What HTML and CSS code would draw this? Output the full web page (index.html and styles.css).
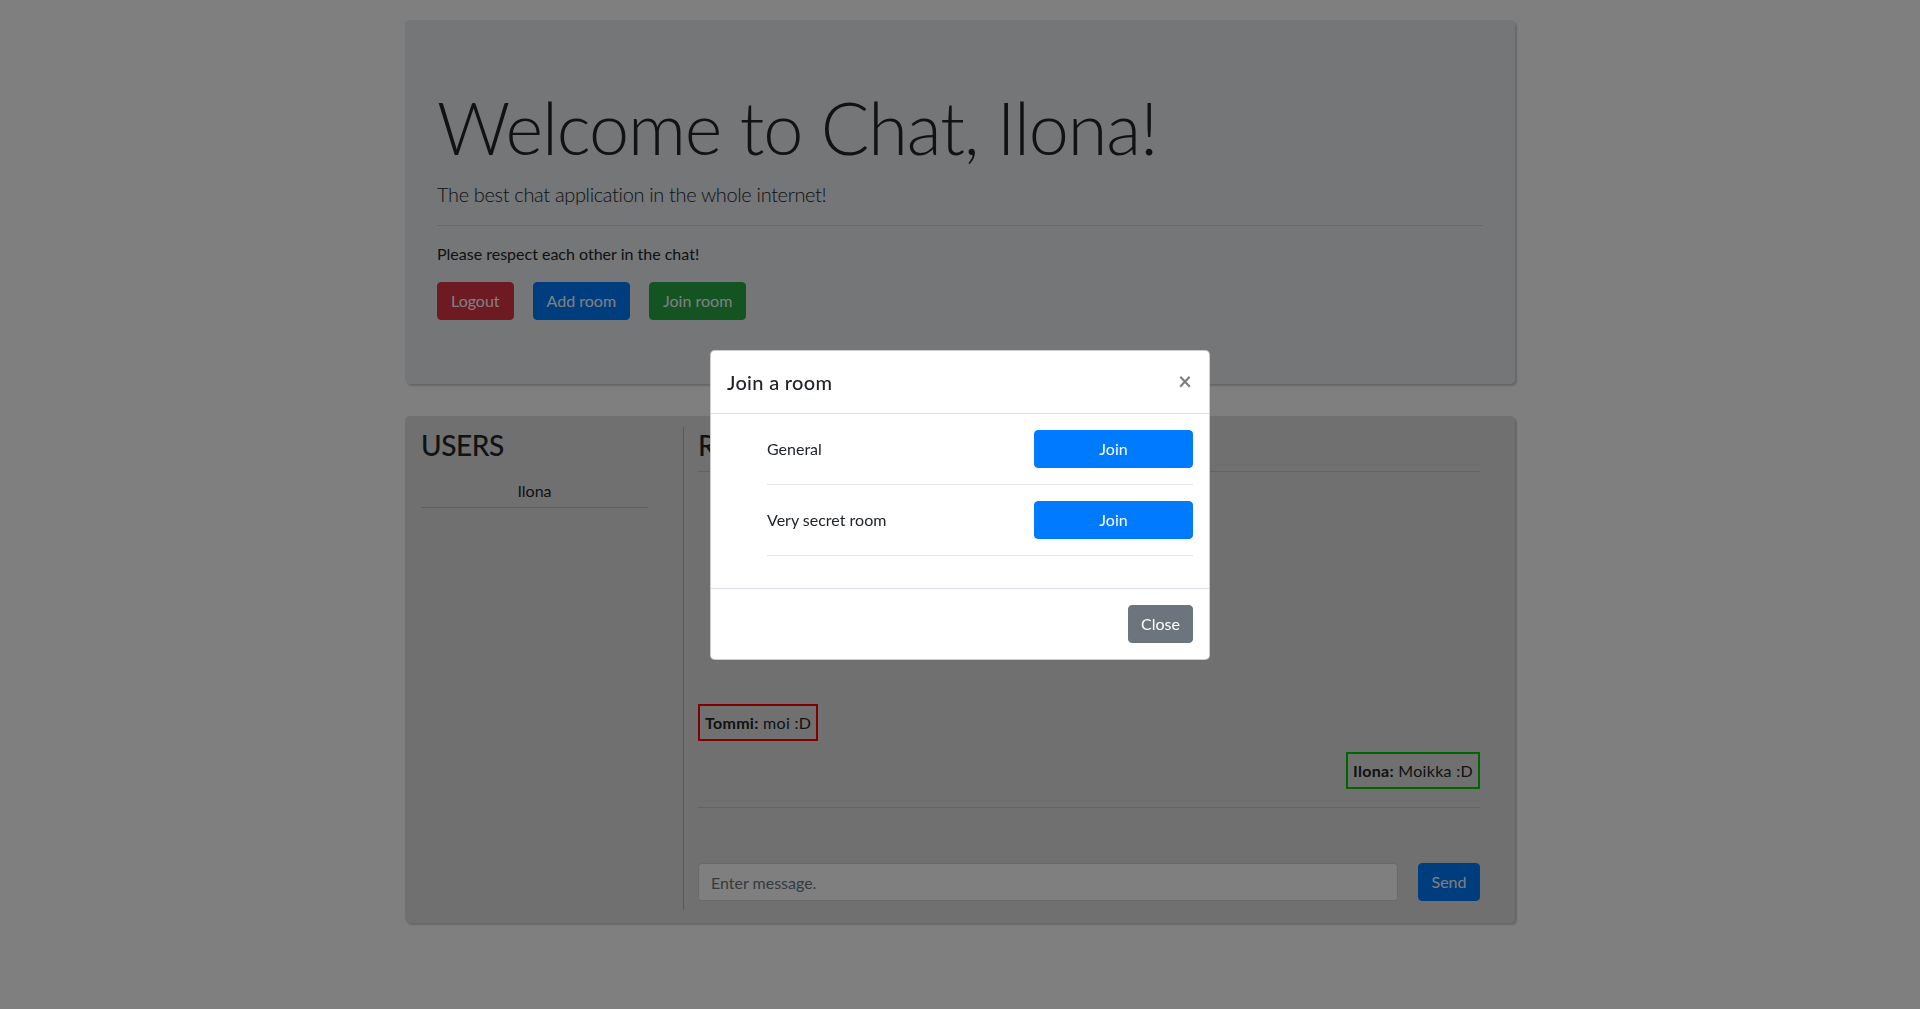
FILE: index.html
```html
<!DOCTYPE html>
<html lang="en">
<head>
<meta charset="utf-8">
<title>Chat</title>
<link rel="stylesheet" href="styles.css">
</head>
<body>
<div class="container">
  <div class="jumbotron">
    <h1 class="display">Welcome to Chat, Ilona!</h1>
    <p class="lead">The best chat application in the whole internet!</p>
    <hr class="divider">
    <p class="note">Please respect each other in the chat!</p>
    <div class="btn-row">
      <button class="btn btn-wide btn-danger">Logout</button>
      <button class="btn btn-wide btn-primary">Add room</button>
      <button class="btn btn-wide btn-success">Join room</button>
    </div>
  </div>

  <div class="chat-card">
    <div class="users">
      <h3 class="section-title">USERS</h3>
      <div class="user-item">Ilona</div>
    </div>
    <div class="chat">
      <div class="chat-header">
        <h3 class="section-title">ROOM: General</h3>
      </div>
      <div class="messages">
        <div class="msg msg-other"><b>Tommi:</b> moi :D</div>
        <div class="msg msg-own"><b>Ilona:</b> Moikka :D</div>
      </div>
      <div class="composer">
        <input class="form-control" type="text" placeholder="Enter message.">
        <button class="btn btn-primary btn-send">Send</button>
      </div>
    </div>
  </div>
</div>

<div class="backdrop"></div>
<div class="modal">
  <div class="modal-content">
    <div class="modal-header">
      <h5 class="modal-title">Join a room</h5>
      <button class="close" aria-label="Close">&times;</button>
    </div>
    <div class="modal-body">
      <ul class="room-list">
        <li>
          <div class="room-row">
            <span>General</span>
            <button class="btn btn-primary btn-join">Join</button>
          </div>
          <hr class="room-sep">
        </li>
        <li>
          <div class="room-row">
            <span>Very secret room</span>
            <button class="btn btn-primary btn-join">Join</button>
          </div>
          <hr class="room-sep">
        </li>
      </ul>
    </div>
    <div class="modal-footer">
      <button class="btn btn-secondary">Close</button>
    </div>
  </div>
</div>
</body>
</html>
```

FILE: styles.css
```css
* { box-sizing: border-box; }

html, body {
  margin: 0;
  height: 100%;
}

body {
  background: #fff;
  font-family: Lato, "Open Sans", sans-serif;
  font-size: 16px;
  line-height: 1.5;
  color: #212529;
}

.container {
  width: 1110px;
  margin: 0 auto;
  padding-top: 20px;
}

/* Jumbotron */
.jumbotron {
  background: #e9ecef;
  border-radius: 4.8px;
  padding: 64px 32px;
  margin-bottom: 32px;
  box-shadow: 2px 2px 2px rgba(0, 0, 0, 0.2);
}

.display {
  font-size: 72px;
  font-weight: 300;
  line-height: 1.2;
  letter-spacing: -1.1px;
  margin: 0 0 9px;
}

.lead {
  font-size: 20px;
  font-weight: 300;
  letter-spacing: -0.35px;
  margin: 0 0 16px;
}

.divider {
  border: 0;
  border-top: 1px solid rgba(0, 0, 0, 0.1);
  margin: 16px 0;
}

.note {
  margin: 0 0 16px;
}

.btn-row {
  display: flex;
  gap: 19px;
}

.btn {
  font-family: inherit;
  font-size: 16px;
  line-height: 1.5;
  padding: 6px 12px;
  border: 1px solid transparent;
  border-radius: 4px;
  color: #fff;
  cursor: pointer;
}

.btn-wide {
  padding: 6px 13px;
}

.btn-danger { background: #dc3545; border-color: #dc3545; }
.btn-primary { background: #007bff; border-color: #007bff; }
.btn-success { background: #28a745; border-color: #28a745; }
.btn-secondary { background: #6c757d; border-color: #6c757d; }

/* Chat card */
.chat-card {
  display: flex;
  height: 507px;
  background: #e0e0e0;
  border-radius: 4.8px;
  padding: 11px 35px 13px 16px;
  box-shadow: 2px 2px 2px rgba(0, 0, 0, 0.2);
}

.users {
  width: 227px;
  margin-right: 35px;
}

.section-title {
  font-size: 28px;
  font-weight: 500;
  line-height: 1.2;
  letter-spacing: -0.4px;
  padding-top: 2px;
  margin: 0;
}

.users .section-title {
  margin-bottom: 8px;
}

.user-item {
  text-align: center;
  padding: 8px 0 4px;
  border-bottom: 1px solid rgba(0, 0, 0, 0.15);
}

.chat {
  flex: 1;
  display: flex;
  flex-direction: column;
  border-left: 1px solid rgba(0, 0, 0, 0.2);
  padding: 0 0 9px 14px;
}

.chat-header {
  padding-bottom: 8px;
  border-bottom: 1px solid rgba(0, 0, 0, 0.1);
}

.messages {
  flex: 1;
  display: flex;
  flex-direction: column;
  justify-content: flex-end;
  gap: 11px;
  padding-bottom: 18px;
  border-bottom: 1px solid rgba(0, 0, 0, 0.1);
}

.msg {
  border: 2px solid;
  padding: 4.5px 5px;
  line-height: 24px;
  letter-spacing: 0.3px;
}

.msg-other {
  align-self: flex-start;
  border-color: #f00;
}

.msg-own {
  align-self: flex-end;
  border-color: #0c0;
}

.composer {
  display: flex;
  align-items: center;
  gap: 20px;
  margin-top: 55px;
}

.form-control {
  flex: 1;
  height: 38px;
  font-family: inherit;
  font-size: 16px;
  padding: 6px 12px;
  background: #fff;
  border: 1px solid #ced4da;
  border-radius: 4px;
  color: #495057;
}

.form-control::placeholder {
  color: #6c757d;
}

.btn-send {
  padding: 6px 12.5px;
}

/* Modal */
.backdrop {
  position: fixed;
  inset: 0;
  background: rgba(0, 0, 0, 0.5);
}

.modal {
  position: fixed;
  inset: 0;
  display: flex;
  align-items: center;
  justify-content: center;
}

.modal-content {
  width: 500px;
  background: #fff;
  border: 1px solid rgba(0, 0, 0, 0.2);
  border-radius: 4.8px;
}

.modal-header {
  display: flex;
  align-items: flex-start;
  justify-content: space-between;
  padding: 16px;
  border-bottom: 1px solid #dee2e6;
}

.modal-title {
  font-size: 20px;
  font-weight: 500;
  line-height: 1.5;
  letter-spacing: 0.3px;
  margin: 0;
}

.close {
  padding: 18px 17px 14px 16px;
  margin: -16px -16px -16px auto;
  background: transparent;
  border: 0;
  font-family: inherit;
  font-size: 24px;
  font-weight: 700;
  line-height: 1;
  color: #000;
  opacity: 0.5;
  text-shadow: 0 1px 0 #fff;
}

.modal-body {
  padding: 16px;
}

.room-list {
  list-style: none;
  margin: 0 0 16px;
  padding-left: 40px;
}

.room-row {
  display: flex;
  align-items: center;
  justify-content: space-between;
}

.btn-join {
  width: 159px;
}

.room-sep {
  border: 0;
  border-top: 1px solid rgba(0, 0, 0, 0.1);
  margin: 16px 0;
}

.modal-footer {
  display: flex;
  justify-content: flex-end;
  padding: 12px;
  border-top: 1px solid #dee2e6;
}

.modal-footer .btn {
  margin: 4px;
}
```
